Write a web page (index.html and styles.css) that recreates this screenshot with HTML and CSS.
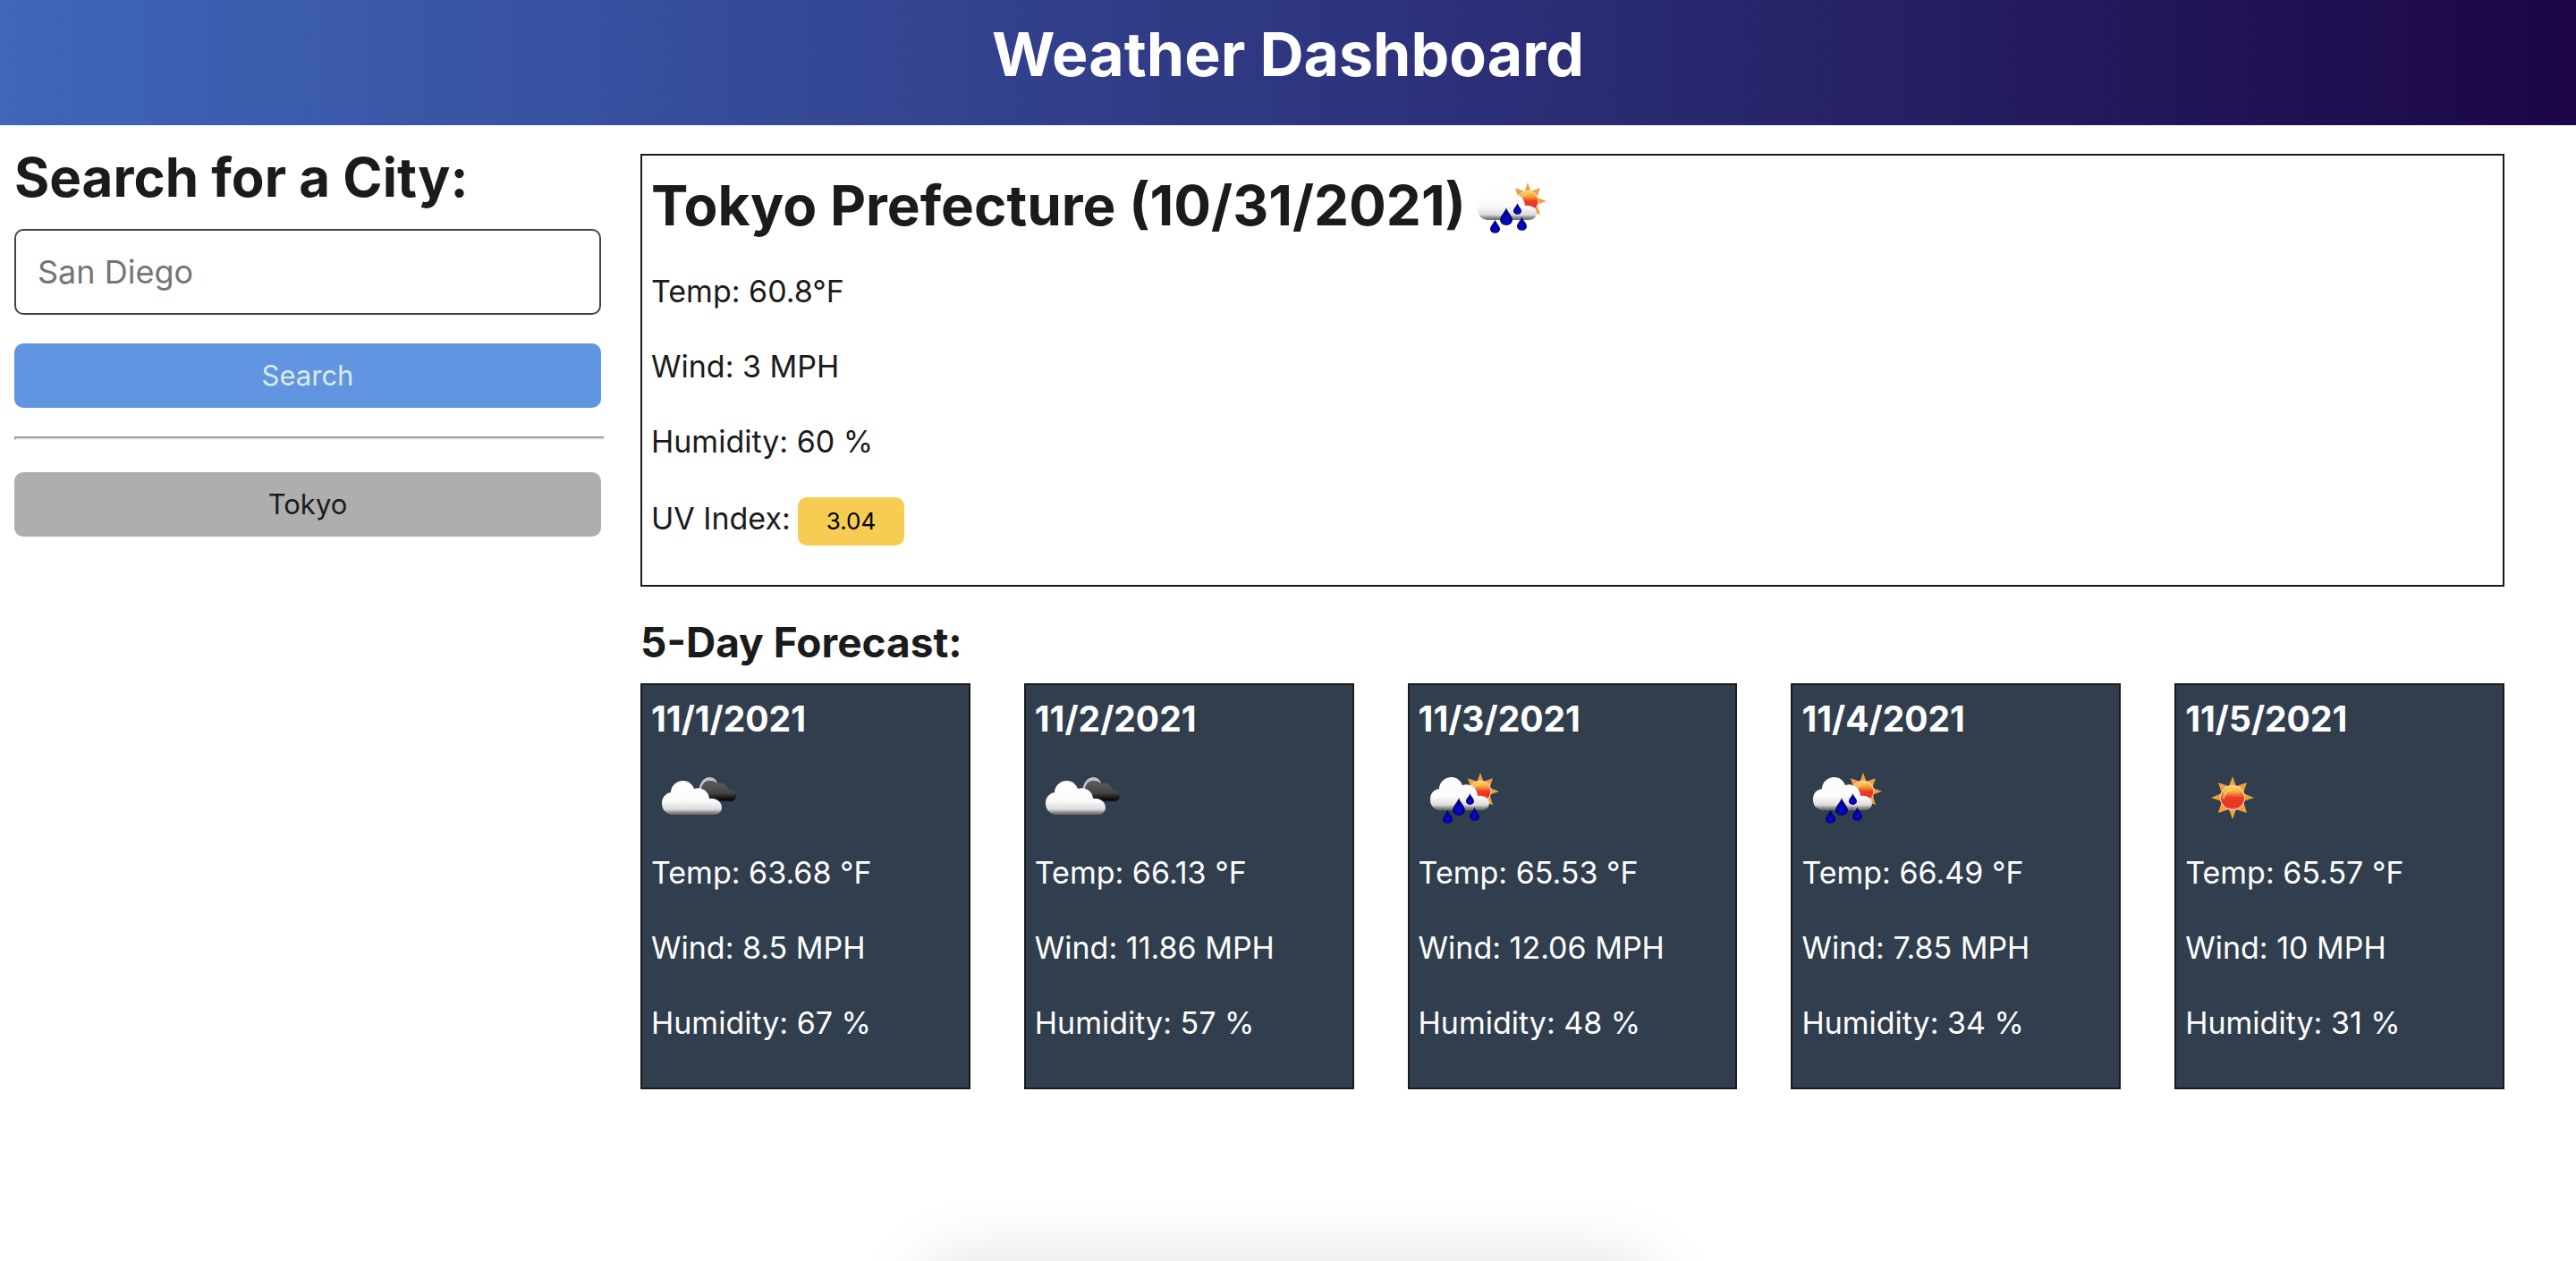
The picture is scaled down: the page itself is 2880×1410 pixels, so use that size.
FILE: index.html
```html
<!DOCTYPE html>
<html lang="en">
<head>
  <meta charset="utf-8">
  <meta name="viewport" content="width=device-width, initial-scale=1">
  <title>Weather Dashboard</title>
  <link rel="stylesheet" href="styles.css">
</head>
<body>
  <svg class="sprite" aria-hidden="true">
    <defs>
      <linearGradient id="cloud-fill" x1="0" y1="0" x2="0" y2="1">
        <stop offset="0" stop-color="#fff"/>
        <stop offset=".6" stop-color="#fafafa"/>
        <stop offset=".84" stop-color="#dcdcdc"/>
        <stop offset=".93" stop-color="#8c8c8c"/>
        <stop offset="1" stop-color="#6a6a6a"/>
      </linearGradient>
      <linearGradient id="dark-fill" x1="0" y1="0" x2="0" y2="1">
        <stop offset="0" stop-color="#5e5e5e"/>
        <stop offset=".6" stop-color="#444"/>
        <stop offset=".9" stop-color="#0c0c0c"/>
        <stop offset="1" stop-color="#111"/>
      </linearGradient>
      <linearGradient id="sun-fill" x1="0" y1="0" x2="0" y2="1">
        <stop offset="0" stop-color="#fbd75c"/>
        <stop offset=".25" stop-color="#f6a83a"/>
        <stop offset=".5" stop-color="#ea3b22"/>
        <stop offset=".88" stop-color="#ec3323"/>
        <stop offset="1" stop-color="#f4687c"/>
      </linearGradient>
      <radialGradient id="drop-fill" cx=".5" cy=".68" r=".5">
        <stop offset="0" stop-color="#0a0ad8"/>
        <stop offset=".6" stop-color="#0404a4"/>
        <stop offset="1" stop-color="#02025e"/>
      </radialGradient>
      <symbol id="sun" viewBox="0 0 48 48">
        <path fill="#f0a03c" d="M24 0l4 11 12-4-4 12 12 5-12 4 4 13-12-4-4 11-4-11-12 4 4-13-12-4 12-5-4-12 12 4z"/>
        <circle cx="24" cy="24" r="14" fill="#fbdcc4"/>
        <circle cx="24" cy="24" r="13" fill="url(#sun-fill)"/>
        <path d="M14 25a10 10 0 0 1 9-10" fill="none" stroke="#fce08a" stroke-width="2" opacity=".7"/>
      </symbol>
      <symbol id="drop" viewBox="0 0 14 20">
        <path fill="url(#drop-fill)" d="M7 0C8 5 14 9 14 14a7 6 0 0 1-14 0C0 9 6 5 7 0z"/>
      </symbol>
      <symbol id="broken-clouds" viewBox="0 0 100 100">
        <path fill="#c4c4c4" d="M53 50c0-12 3-20 12-21 5 0 8 3 9 7l-10 16z"/>
        <path fill="url(#dark-fill)" d="M56 55V42c1-6 5-10 11-9 3 0 5 1 7 3 5-2 11 1 13 7 6 0 8 4 8 7 0 4-3 6-7 6z"/>
        <path fill="url(#cloud-fill)" d="M23 71c-7-1-11-6-11-13 0-6 4-11 10-12 0-7 6-13 14-13 6 0 10 4 12 9 8-3 17 3 17 11 8-1 14 4 14 10 0 5-4 8-9 8z"/>
      </symbol>
      <symbol id="rain-sun" viewBox="0 0 100 100">
        <use href="#sun" x="48" y="24" width="42" height="42"/>
        <path fill="url(#cloud-fill)" d="M24 66c-7-1-11-5-11-12s4-11 10-12c0-7 6-13 14-13 6 0 10 4 12 9 8-3 17 3 17 12 8-1 13 3 13 8s-4 8-9 8z"/>
        <use href="#drop" x="38" y="52" width="14" height="20"/>
        <use href="#drop" x="53" y="47" width="9" height="13"/>
        <use href="#drop" x="27" y="65" width="11" height="16"/>
        <use href="#drop" x="57" y="62" width="11" height="16"/>
      </symbol>
      <symbol id="clear" viewBox="0 0 100 100">
        <use href="#sun" x="29" y="28" width="48" height="48"/>
      </symbol>
    </defs>
  </svg>

  <header class="banner">
    <h1 class="banner-title">Weather Dashboard</h1>
  </header>

  <div class="layout">
    <aside class="sidebar">
      <form class="search" onsubmit="return false">
        <label class="search-label" for="city">Search for a City:</label>
        <input class="search-input" id="city" type="text" placeholder="San Diego">
        <button class="btn btn-search" type="submit">Search</button>
      </form>
      <hr class="divider">
      <button class="btn btn-city" type="button">Tokyo</button>
    </aside>

    <main class="content">
      <section class="current">
        <h2 class="current-title">Tokyo Prefecture (10/31/2021)
          <svg class="icon" role="img" aria-label="Rain"><use href="#rain-sun"/></svg>
        </h2>
        <div class="stats">
          <p>Temp: 60.8°F</p>
          <p>Wind: 3 MPH</p>
          <p>Humidity: 60 %</p>
          <p class="uv">UV Index: <button class="uv-badge" type="button">3.04</button></p>
        </div>
      </section>

      <h3 class="forecast-title">5-Day Forecast:</h3>
      <section class="forecast">
        <article class="day">
          <h4 class="day-date">11/1/2021</h4>
          <svg class="icon" role="img" aria-label="Broken clouds"><use href="#broken-clouds"/></svg>
          <div class="stats">
            <p>Temp: 63.68 °F</p>
            <p>Wind: 8.5 MPH</p>
            <p>Humidity: 67 %</p>
          </div>
        </article>
        <article class="day">
          <h4 class="day-date">11/2/2021</h4>
          <svg class="icon" role="img" aria-label="Broken clouds"><use href="#broken-clouds"/></svg>
          <div class="stats">
            <p>Temp: 66.13 °F</p>
            <p>Wind: 11.86 MPH</p>
            <p>Humidity: 57 %</p>
          </div>
        </article>
        <article class="day">
          <h4 class="day-date">11/3/2021</h4>
          <svg class="icon" role="img" aria-label="Rain"><use href="#rain-sun"/></svg>
          <div class="stats">
            <p>Temp: 65.53 °F</p>
            <p>Wind: 12.06 MPH</p>
            <p>Humidity: 48 %</p>
          </div>
        </article>
        <article class="day">
          <h4 class="day-date">11/4/2021</h4>
          <svg class="icon" role="img" aria-label="Rain"><use href="#rain-sun"/></svg>
          <div class="stats">
            <p>Temp: 66.49 °F</p>
            <p>Wind: 7.85 MPH</p>
            <p>Humidity: 34 %</p>
          </div>
        </article>
        <article class="day">
          <h4 class="day-date">11/5/2021</h4>
          <svg class="icon" role="img" aria-label="Clear sky"><use href="#clear"/></svg>
          <div class="stats">
            <p>Temp: 65.57 °F</p>
            <p>Wind: 10 MPH</p>
            <p>Humidity: 31 %</p>
          </div>
        </article>
      </section>
    </main>
  </div>
</body>
</html>
```
FILE: styles.css
```css
* {
  box-sizing: border-box;
}

body {
  margin: 0;
  background: #fff;
  color: #1b1b1b;
  font-family: Inter, "Liberation Sans", sans-serif;
  font-size: 34px;
  line-height: 44px;
}

h1, h2, h3, h4, p {
  margin: 0;
}

/* soft shadow rising from the bottom edge of the window */
body::after {
  content: "";
  position: fixed;
  left: 0;
  right: 0;
  bottom: -62px;
  width: 28%;
  height: 50px;
  margin: 0 auto;
  border-radius: 20px;
  box-shadow: 0 0 80px rgba(0, 0, 0, 0.2);
}

.sprite {
  position: absolute;
  width: 0;
  height: 0;
}

.banner {
  padding: 16px 16px 36px;
  background: linear-gradient(90deg, #3f66b9, #2d337c 54%, #1c0645);
  color: #fff;
  text-align: center;
}

.banner-title {
  font-size: 68px;
  line-height: 88px;
}

.layout {
  display: grid;
  grid-template-columns: 660px 1fr;
  gap: 40px;
  padding: 16px 80px 16px 16px;
}

.sidebar {
  padding-top: 4px;
}

.search {
  display: flex;
  flex-direction: column;
  margin-right: 4px;
}

.search-label {
  margin-bottom: 20px;
  font-size: 60px;
  font-weight: 700;
  line-height: 76px;
}

.search-input {
  height: 96px;
  margin-bottom: 32px;
  padding: 0 24px;
  border: 2px solid #444;
  border-radius: 10px;
  background: #fff;
  color: inherit;
  font: inherit;
  font-size: 36px;
}

.search-input::placeholder {
  color: #757575;
}

.btn {
  height: 72px;
  border: 0;
  border-radius: 10px;
  font: inherit;
  font-size: 31px;
}

.btn-search {
  background: #6195e1;
  color: #dbe9e6;
}

.btn-city {
  width: calc(100% - 4px);
  background: #aeaeae;
  color: #1b1b1b;
}

.divider {
  margin: 32px 0 36px;
  border: 2px inset #eee;
}

.content {
  padding-top: 16px;
}

.current {
  padding: 6px 10px 44px;
  border: 2px solid #1b1b1b;
}

.current-title {
  display: flex;
  align-items: center;
  margin-bottom: 24px;
  font-size: 62px;
  line-height: 100px;
}

.icon {
  display: block;
  flex: none;
  width: 100px;
  height: 100px;
}

.stats {
  display: grid;
  gap: 40px;
}

.uv {
  display: flex;
  align-items: baseline;
  gap: 8px;
}

.uv-badge {
  height: 54px;
  padding: 0 32px;
  border: 0;
  border-radius: 10px;
  background: #f6cc52;
  color: #000;
  font: inherit;
  font-size: 26px;
}

.forecast-title {
  margin: 32px 0 16px;
  font-size: 46px;
  line-height: 60px;
}

.forecast {
  display: grid;
  grid-template-columns: repeat(5, 1fr);
  gap: 60px;
}

.day {
  padding: 14px 10px 50px;
  border: 2px solid #1b1b1b;
  background: #313e4e;
  color: #fff;
}

.day-date {
  margin-bottom: 12px;
  font-size: 39px;
  line-height: 48px;
}

.day .icon {
  margin-bottom: 14px;
}
```
